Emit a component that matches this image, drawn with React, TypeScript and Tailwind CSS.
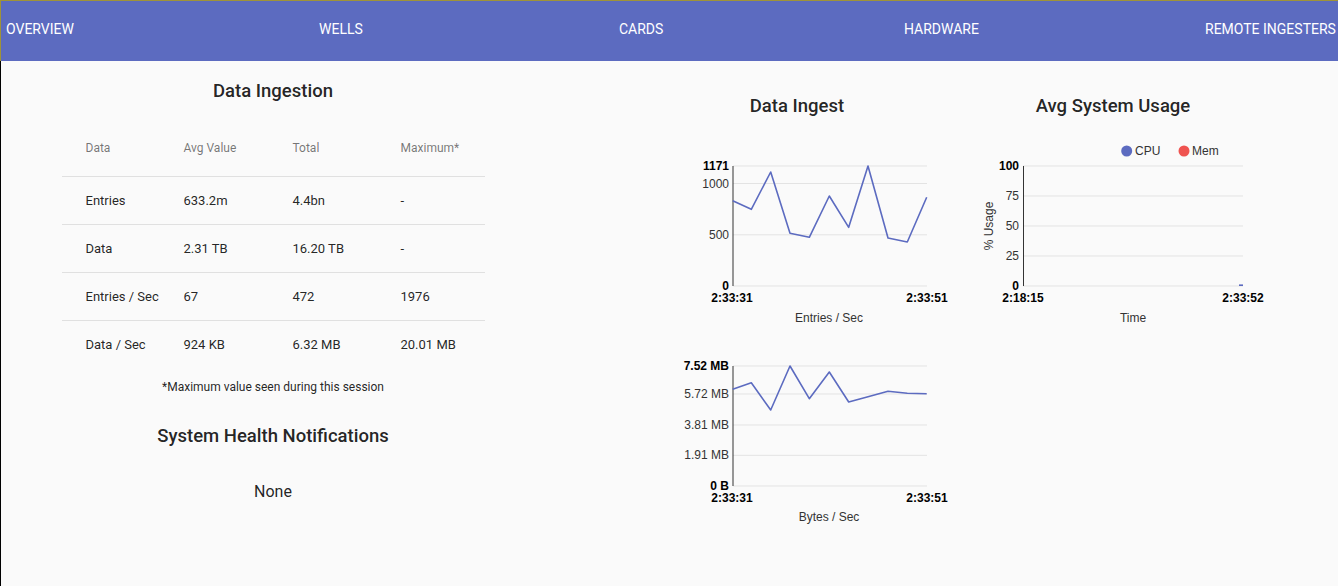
import React from 'react'

const tabs = [
	{ label: 'Overview' },
	{ label: 'Wells' },
	{ label: 'Cards' },
	{ label: 'Hardware' },
	{ label: 'Remote Ingesters' },
]

const rows = [
	{ name: 'Entries', avg: '633.2m', total: '4.4bn', max: '-' },
	{ name: 'Data', avg: '2.31 TB', total: '16.20 TB', max: '-' },
	{ name: 'Entries / Sec', avg: '67', total: '472', max: '1976' },
	{ name: 'Data / Sec', avg: '924 KB', total: '6.32 MB', max: '20.01 MB' },
]

const xs = [52.7, 71.3, 90.7, 110, 129.3, 149.3, 168.7, 188, 208, 227.3, 246.7]
const entriesY = [50.7, 59.3, 22, 83.3, 87.3, 46, 77.3, 16, 88, 92, 47.3]
const bytesY = [39.3, 32.7, 60, 16, 48.7, 22, 52, 46.7, 41.3, 43.3, 43.7]

const toPoints = (ys: number[]) => xs.map((x, i) => `${x},${ys[i]}`).join(' ')

interface Tick {
	y: number
	label: string
	bold?: boolean
}

const LineChart = ({
	ticks,
	ys,
	caption,
	xLabelY,
	captionY,
}: {
	ticks: Tick[]
	ys: number[]
	caption: string
	xLabelY: number
	captionY: number
}) => (
	<svg width="280" height="180" className="block" fontFamily="'Liberation Sans', Arial, sans-serif" fontSize="12">
		{ticks.map((t) => (
			<line key={'g' + t.y} x1="53" x2="247" y1={t.y} y2={t.y} stroke="#e3e3e3" strokeWidth="1" />
		))}
		<line x1="53" x2="53" y1="16" y2="136" stroke="#333" strokeWidth="1" />
		{ticks.map((t) => (
			<text
				key={'t' + t.y}
				x="49"
				y={t.y}
				textAnchor="end"
				dominantBaseline="central"
				fill={t.bold ? '#000' : '#333'}
				fontWeight={t.bold ? 700 : 400}
			>
				{t.label}
			</text>
		))}
		<polyline points={toPoints(ys)} fill="none" stroke="#5c6bc0" strokeWidth="1.6" strokeLinejoin="round" />
		<text x="52" y={xLabelY} textAnchor="middle" dominantBaseline="central" fontWeight="700" fill="#000">
			2:33:31
		</text>
		<text x="247" y={xLabelY} textAnchor="middle" dominantBaseline="central" fontWeight="700" fill="#000">
			2:33:51
		</text>
		<text x="149" y={captionY} textAnchor="middle" dominantBaseline="central" fill="#333">
			{caption}
		</text>
	</svg>
)

const UsageChart = () => {
	const ticks = [
		{ y: 36, label: '100', bold: true },
		{ y: 66, label: '75' },
		{ y: 96, label: '50' },
		{ y: 126, label: '25' },
		{ y: 156, label: '0', bold: true },
	]
	return (
		<svg width="320" height="200" className="block" fontFamily="'Liberation Sans', Arial, sans-serif" fontSize="12">
			<circle cx="166.7" cy="21" r="5.5" fill="#5c6bc0" />
			<text x="175" y="21" dominantBaseline="central" fill="#333">
				CPU
			</text>
			<circle cx="224" cy="21" r="5.5" fill="#ef5350" />
			<text x="232" y="21" dominantBaseline="central" fill="#333">
				Mem
			</text>
			{ticks.map((t) => (
				<line key={'g' + t.y} x1="63" x2="283" y1={t.y} y2={t.y} stroke="#e3e3e3" strokeWidth="1" />
			))}
			<line x1="63.5" x2="63.5" y1="36" y2="156" stroke="#333" strokeWidth="1" />
			{ticks.map((t) => (
				<text
					key={'t' + t.y}
					x="59"
					y={t.y}
					textAnchor="end"
					dominantBaseline="central"
					fill={t.bold ? '#000' : '#333'}
					fontWeight={t.bold ? 700 : 400}
				>
					{t.label}
				</text>
			))}
			<line x1="279" x2="283" y1="155.2" y2="155.2" stroke="#5c6bc0" strokeWidth="1.6" />
			<text
				x="29"
				y="96"
				textAnchor="middle"
				dominantBaseline="central"
				fill="#333"
				transform="rotate(-90 29 96)"
			>
				% Usage
			</text>
			<text x="63" y="168" textAnchor="middle" dominantBaseline="central" fontWeight="700" fill="#000">
				2:18:15
			</text>
			<text x="283" y="168" textAnchor="middle" dominantBaseline="central" fontWeight="700" fill="#000">
				2:33:52
			</text>
			<text x="173" y="188" textAnchor="middle" dominantBaseline="central" fill="#333">
				Time
			</text>
		</svg>
	)
}

const App = () => {
	return (
		<div className="min-h-[586px] bg-[#fafafa] font-['Roboto',sans-serif] text-[rgba(0,0,0,0.87)]">
			{/* tabs */}
			<div className="grid h-[61px] grid-cols-[313px_300px_285px_301px_1fr] items-center border-l border-t border-[#9f9338] bg-[#5c6bc0] pb-[4px] pl-[5px] text-[14px] uppercase text-white">
				{tabs.map((t) => (
					<div key={t.label} className="whitespace-nowrap leading-[20px]">
						{t.label}
					</div>
				))}
			</div>

			<div className="flex min-h-[525px] border-l border-black">
				{/* left column */}
				<div className="flex w-[544px] flex-col items-center pt-[18px]">
					<h2 className="h-[24px] text-[18.5px] font-medium leading-[24px]">Data Ingestion</h2>
					<table className="mt-[17px] w-[423px] table-fixed border-collapse text-left">
						<colgroup>
							<col className="w-[98px]" />
							<col className="w-[109px]" />
							<col className="w-[108px]" />
							<col />
						</colgroup>
						<thead>
							<tr className="h-[56px] border-b border-[#e0e0e0] text-[12px] text-[rgba(0,0,0,0.54)]">
								<th className="pl-[24px] font-normal">Data</th>
								<th className="pl-[24px] font-normal">Avg Value</th>
								<th className="pl-[24px] font-normal">Total</th>
								<th className="pl-[24px] font-normal">Maximum*</th>
							</tr>
						</thead>
						<tbody className="text-[13px]">
							{rows.map((r, i) => (
								<tr
									key={r.name}
									className={`h-[48px] ${i < rows.length - 1 ? 'border-b border-[#e0e0e0]' : ''}`}
								>
									<td className="whitespace-nowrap pl-[24px] pt-[1px]">{r.name}</td>
									<td className="pl-[24px] pt-[1px]">{r.avg}</td>
									<td className="pl-[24px] pt-[1px]">{r.total}</td>
									<td className="pl-[24px] pt-[1px]">{r.max}</td>
								</tr>
							))}
						</tbody>
					</table>
					<p className="mt-[11px] text-[12px] leading-[16px]">*Maximum value seen during this session</p>
					<h2 className="mt-[29px] h-[24px] text-[18.5px] font-medium leading-[24px]">
						System Health Notifications
					</h2>
					<p className="mt-[32px] text-[16px] leading-[24px]">None</p>
				</div>

				{/* charts */}
				<div className="ml-[135px] flex">
					<div className="flex w-[280px] flex-col pt-[33px]">
						<h2 className="mr-[46px] h-[24px] text-center text-[18.5px] font-medium leading-[24px]">
							Data Ingest
						</h2>
						<div className="mt-[32px]">
							<LineChart
								ticks={[
									{ y: 16, label: '1171', bold: true },
									{ y: 33.5, label: '1000' },
									{ y: 84.8, label: '500' },
									{ y: 136, label: '0', bold: true },
								]}
								ys={entriesY}
								caption="Entries / Sec"
								xLabelY={148}
								captionY={168}
							/>
						</div>
						<div className="mt-[20px]">
							<LineChart
								ticks={[
									{ y: 16, label: '7.52 MB', bold: true },
									{ y: 44, label: '5.72 MB' },
									{ y: 75, label: '3.81 MB' },
									{ y: 105.3, label: '1.91 MB' },
									{ y: 136, label: '0 B', bold: true },
								]}
								ys={bytesY}
								caption="Bytes / Sec"
								xLabelY={148}
								captionY={167}
							/>
						</div>
					</div>
					<div className="flex w-[320px] flex-col pt-[33px]">
						<h2 className="ml-[10px] h-[24px] w-[286px] text-center text-[18.5px] font-medium leading-[24px]">
							Avg System Usage
						</h2>
						<div className="mt-[12px]">
							<UsageChart />
						</div>
					</div>
				</div>
			</div>
		</div>
	)
}

export default App
